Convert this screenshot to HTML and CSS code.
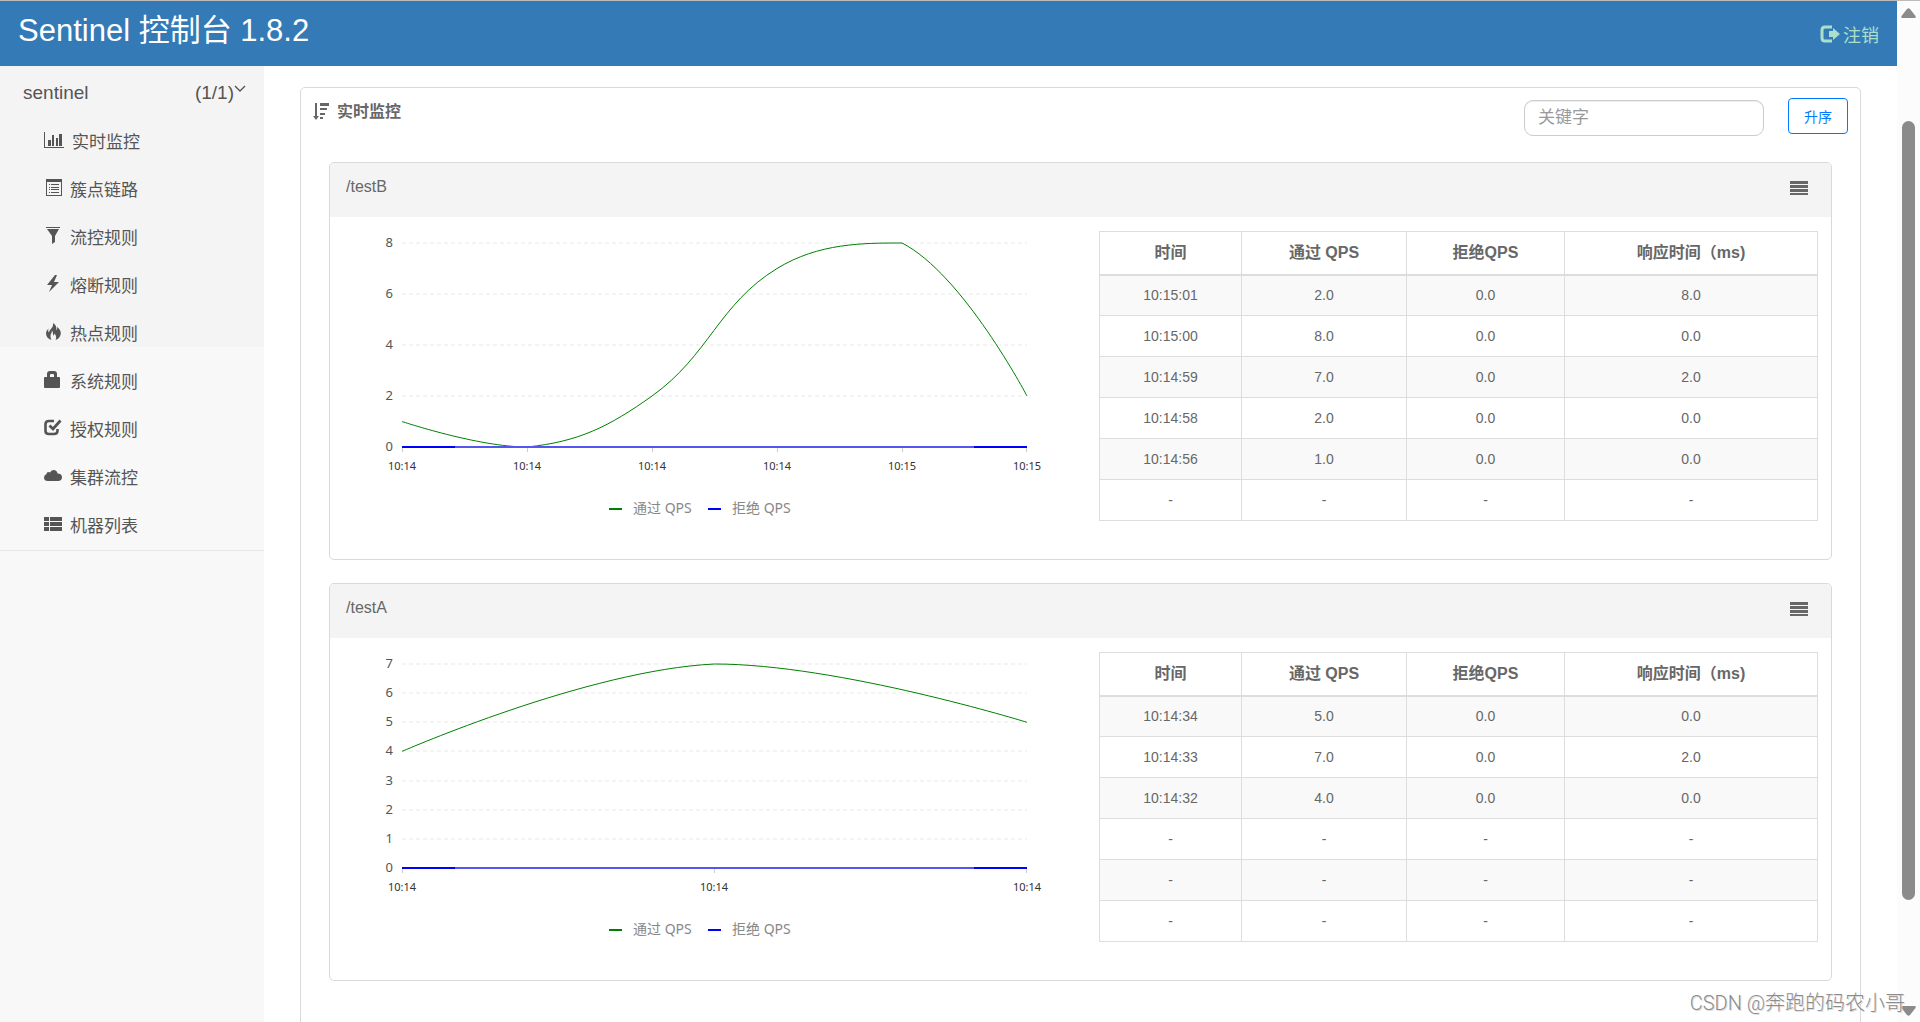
FILE: index.html
```html
<!DOCTYPE html>
<html lang="zh-CN">
<head>
<meta charset="utf-8">
<title>Sentinel 控制台</title>
<link rel="stylesheet" href="styles.css">
</head>
<body>
<div class="window">
  <div class="app">
    <header class="topbar">
      <h1 class="brand">Sentinel 控制台 1.8.2</h1>
      <a class="logout" href="#">
        <svg class="icon-logout" viewBox="0 0 20 18" aria-hidden="true"><path d="M12 2H5Q2 2 2 5v8q0 3 3 3h7" fill="none" stroke="currentColor" stroke-width="3"/><path d="M9 6h4V3l7 6-7 6v-3H9z" fill="currentColor"/></svg>注销</a>
    </header>
    <div class="columns">
      <nav class="sidebar">
        <a class="app-row" href="#"><span>sentinel</span><span class="app-count">(1/1)<svg class="caret" viewBox="0 0 12 8" aria-hidden="true"><path d="M1 1l5 5 5-5" fill="none" stroke="currentColor" stroke-width="1.4"/></svg></span></a>
        <ul class="menu">
          <li><a href="#"><svg class="icon wide" viewBox="0 0 20 16"><path d="M0 0h1v15h19v1H0zM4 8h3v6H4zM8 3h2v11H8zM12 6h2v8h-2zM15 2h3v12h-3z"/></svg>实时监控</a></li>
          <li><a href="#"><svg class="icon" viewBox="0 0 18 18"><path fill-rule="evenodd" d="M2 0h16v17H2zM3 3v13h14V3zM5 5h1v1H5zM7 5h8v1H7zM5 8h1v1H5zM7 8h8v1H7zM5 10h1v1H5zM7 10h8v1H7zM5 13h1v1H5zM7 13h8v1H7z"/></svg>簇点链路</a></li>
          <li><a href="#"><svg class="icon" viewBox="0 0 18 18"><path d="M2 0h14v1H2zM3 2h12l-4 7v6l-3 2V9z"/></svg>流控规则</a></li>
          <li><a href="#"><svg class="icon" viewBox="0 0 18 18"><path d="M11 0L3 10h5L5 17l10-10H10L13 0z"/></svg>熔断规则</a></li>
          <li><a href="#"><svg class="icon" viewBox="0 0 18 18"><path d="M9 0c3 2 4 4 3 7 1-.4 1.400-1.500 1-3 3 2 4.500 5 3.500 8-.8 2.600-2.500 4.300-5 5 1-2 1-4-1-6.500-.3 1-.6 1.800-1.500 2.300C9 10.500 9 9 8 7.500 8 10 6.300 11 6.500 13.500c.1 1.500.5 2.500 1 3.500C4 16 2 13.500 2 10 2.200 8.500 3 7 4.500 5.500c-.4 1.800-.4 3 .3 4C5.500 6.500 10 4.500 9 0z"/></svg>热点规则</a></li>
          <li><a href="#"><svg class="icon" viewBox="0 0 18 18"><path fill-rule="evenodd" d="M3 6V3q0-3 3-3h4q3 0 3 3v3h2q1 0 1 1v9q0 1-1 1H1q-1 0-1-1V7q0-1 1-1zM6 6h4V4q0-1-1-1H7Q6 3 6 4z"/></svg>系统规则</a></li>
          <li><a href="#"><svg class="icon" viewBox="0 0 18 18"><path d="M10 2H5Q1.500 2 1.500 5v7q0 3 3.500 3h5q3.500 0 3.500-3v-2" fill="none" stroke="currentColor" stroke-width="2.600"/><path d="M5.500 6.500L9 10l7.500-8.500" fill="none" stroke="currentColor" stroke-width="2.800"/></svg>授权规则</a></li>
          <li><a href="#"><svg class="icon" viewBox="0 0 18 18"><path d="M4 14Q0 14 0 10.500 0 8 2.500 7 2.500 5 4.500 5q1 0 1.500.5Q7 3 9.500 3 13 3 13.500 6.500 18 6.500 18 10.300 18 14 14 14z"/></svg>集群流控</a></li>
          <li><a href="#"><svg class="icon" viewBox="0 0 18 18"><path d="M0 2h5v4H0zM6 2h12v4H6zM0 7h5v4H0zM6 7h12v4H6zM0 12h5v4H0zM6 12h12v4H6z"/></svg>机器列表</a></li>
        </ul>
      </nav>
      <main class="content">
        <section class="panel">
          <div class="panel-head">
            <h2 class="panel-title"><svg class="icon-sort" viewBox="0 0 16 17" aria-hidden="true"><path d="M2 0h2v13h2l-3 4-3-4h2zM7 0h9v3H7zM7 5h7v2H7zM7 10h5v2H7zM7 14h3v2H7z"/></svg>实时监控</h2>
            <div class="tools">
              <input class="search" type="text" placeholder="关键字" aria-label="关键字">
              <button class="sort-btn" type="button">升序</button>
            </div>
          </div>

          <article class="card">
            <header class="card-head"><h3>/testB</h3><button class="list-btn" type="button" aria-label="列表"><svg viewBox="0 0 18 14"><path d="M0 0h18v3H0zM0 4h18v3H0zM0 8h18v3H0zM0 12h18v2H0z"/></svg></button></header>
            <div class="card-body">
              <svg class="chart" viewBox="0 0 743 289" role="img" aria-label="/testB QPS">
                <path class="grid" d="M59 12H684M59 63H684M59 114H684M59 165H684"/>
                <g class="y-label"><text x="50" y="16">8</text><text x="50" y="67">6</text><text x="50" y="118">4</text><text x="50" y="169">2</text><text x="50" y="220">0</text></g>
                <path class="tick" d="M59.500 216v5M184.500 216v5M309.500 216v5M434.500 216v5M559.500 216v5M683.500 216v5"/>
                <path class="pass" d="M59 190.500C59 190.500 135.400 216 184 216C235.400 210.800 266 195.700 309 165C366 124.300 375.700 73.200 434 37.500C475.700 12 519.800 12 559 12C619.800 43 684 165 684 165"/>
                <path class="block-mid" d="M112 216H631"/><path class="block" d="M59 216h53M631 216h53"/>
                <g class="x-label"><text x="59" y="239">10:14</text><text x="184" y="239">10:14</text><text x="309" y="239">10:14</text><text x="434" y="239">10:14</text><text x="559" y="239">10:15</text><text x="684" y="239">10:15</text></g>
                <path class="key-pass" d="M266 278h13"/><path class="key-block" d="M365 278h13"/>
                <g class="legend"><text x="290" y="282">通过 QPS</text><text x="389" y="282">拒绝 QPS</text></g>
              </svg>
              <table class="metrics">
                <colgroup><col class="c-time"><col class="c-pass"><col class="c-block"><col></colgroup>
                <thead><tr><th>时间</th><th>通过 QPS</th><th>拒绝QPS</th><th>响应时间（ms)</th></tr></thead>
                <tbody>
                  <tr><td>10:15:01</td><td>2.0</td><td>0.0</td><td>8.0</td></tr>
                  <tr><td>10:15:00</td><td>8.0</td><td>0.0</td><td>0.0</td></tr>
                  <tr><td>10:14:59</td><td>7.0</td><td>0.0</td><td>2.0</td></tr>
                  <tr><td>10:14:58</td><td>2.0</td><td>0.0</td><td>0.0</td></tr>
                  <tr><td>10:14:56</td><td>1.0</td><td>0.0</td><td>0.0</td></tr>
                  <tr><td>-</td><td>-</td><td>-</td><td>-</td></tr>
                </tbody>
              </table>
            </div>
          </article>

          <article class="card">
            <header class="card-head"><h3>/testA</h3><button class="list-btn" type="button" aria-label="列表"><svg viewBox="0 0 18 14"><path d="M0 0h18v3H0zM0 4h18v3H0zM0 8h18v3H0zM0 12h18v2H0z"/></svg></button></header>
            <div class="card-body">
              <svg class="chart" viewBox="0 0 743 289" role="img" aria-label="/testA QPS">
                <path class="grid" d="M59 12H684M59 41H684M59 70H684M59 99H684M59 129H684M59 158H684M59 187H684"/>
                <g class="y-label"><text x="50" y="16">7</text><text x="50" y="45">6</text><text x="50" y="74">5</text><text x="50" y="103">4</text><text x="50" y="133">3</text><text x="50" y="162">2</text><text x="50" y="191">1</text><text x="50" y="220">0</text></g>
                <path class="tick" d="M59.500 216v5M371.500 216v5M683.500 216v5"/>
                <path class="pass" d="M59 99.400C59 99.400 245.300 17.900 371.500 12C495.300 12 684 70.300 684 70.300"/>
                <path class="block-mid" d="M112 216H631"/><path class="block" d="M59 216h53M631 216h53"/>
                <g class="x-label"><text x="59" y="239">10:14</text><text x="371" y="239">10:14</text><text x="684" y="239">10:14</text></g>
                <path class="key-pass" d="M266 278h13"/><path class="key-block" d="M365 278h13"/>
                <g class="legend"><text x="290" y="282">通过 QPS</text><text x="389" y="282">拒绝 QPS</text></g>
              </svg>
              <table class="metrics">
                <colgroup><col class="c-time"><col class="c-pass"><col class="c-block"><col></colgroup>
                <thead><tr><th>时间</th><th>通过 QPS</th><th>拒绝QPS</th><th>响应时间（ms)</th></tr></thead>
                <tbody>
                  <tr><td>10:14:34</td><td>5.0</td><td>0.0</td><td>0.0</td></tr>
                  <tr><td>10:14:33</td><td>7.0</td><td>0.0</td><td>2.0</td></tr>
                  <tr><td>10:14:32</td><td>4.0</td><td>0.0</td><td>0.0</td></tr>
                  <tr><td>-</td><td>-</td><td>-</td><td>-</td></tr>
                  <tr><td>-</td><td>-</td><td>-</td><td>-</td></tr>
                  <tr><td>-</td><td>-</td><td>-</td><td>-</td></tr>
                </tbody>
              </table>
            </div>
          </article>
        </section>
      </main>
    </div>
  </div>
  <div class="scrollbar" aria-hidden="true">
    <svg class="arrow" viewBox="0 0 15 10"><path d="M6 1q1.500-1.500 3 0l5.500 7q.8 2-1 2h-12q-1.800 0-1-2z"/></svg>
    <div class="track"><div class="thumb"></div></div>
    <svg class="arrow" viewBox="0 0 15 10"><path d="M6 9q1.500 1.500 3 0l5.500-7q.8-2-1-2h-12q-1.800 0-1 2z"/></svg>
  </div>
  <div class="watermark">CSDN @奔跑的码农小哥</div>
</div>
</body>
</html>
```
FILE: styles.css
```css
* { box-sizing: border-box; }
body {
  margin: 0;
  background: #fff;
  color: #676767;
  font-family: "Liberation Sans", "Noto Sans CJK SC", sans-serif;
  font-size: 16px;
}
a { color: inherit; text-decoration: none; }
h1, h2, h3 { margin: 0; font-weight: 400; }

/* page frame */
.window {
  position: relative;
  display: flex;
  height: 100vh;
  overflow: hidden;
  border-top: 1px solid #bbb;
}
.app { flex: 1; min-width: 0; display: flex; flex-direction: column; }

/* top bar */
.topbar {
  flex: none;
  display: flex;
  justify-content: space-between;
  height: 65px;
  padding: 0 18px;
  background: #337ab7;
}
.brand { color: #fff; font-size: 31px; line-height: 60px; }
.logout {
  display: flex;
  align-items: center;
  gap: 3px;
  color: #abdfcb;
  font-size: 18px;
}
.icon-logout { width: 20px; height: 18px; }

.columns { flex: 1; min-height: 0; display: flex; }

/* sidebar */
.sidebar {
  flex: none;
  width: 264px;
  background: linear-gradient(#f4f4f4 281px, #f8f8f8 281px);
  color: #555;
}
.app-row {
  display: flex;
  justify-content: space-between;
  padding: 3px 18px 0 23px;
  font-size: 19px;
  line-height: 47px;
}
.app-count { display: flex; }
.caret { width: 12px; height: 8px; margin-top: 16px; }
.menu {
  margin: 0;
  padding: 0 0 2px;
  list-style: none;
  border-bottom: 1px solid #e7e7e7;
}
.menu a {
  display: flex;
  align-items: center;
  gap: 8px;
  height: 48px;
  padding-left: 44px;
  font-size: 17px;
}
.icon { width: 18px; height: 18px; fill: currentColor; }
.icon.wide { width: 20px; height: 16px; }

/* content */
.content { flex: 1; min-width: 0; padding: 21px 36px 0; }
.panel {
  min-height: 1100px;
  padding: 0 28px;
  border: 1px solid #d9d9d9;
  border-radius: 5px;
}
.panel-head {
  display: flex;
  justify-content: space-between;
  height: 74px;
  margin: 0 -16px;
  padding-top: 10px;
}
.panel-title {
  display: flex;
  gap: 8px;
  font-size: 16px;
  font-weight: 700;
  line-height: 28px;
}
.icon-sort { width: 16px; height: 17px; margin-top: 5px; fill: currentColor; }
.tools { display: flex; align-items: flex-end; gap: 24px; height: 38px; }
.search {
  width: 240px;
  height: 36px;
  padding: 0 13px;
  border: 1px solid #ccc;
  border-radius: 9px;
  box-shadow: inset 0 1px 1px rgba(0, 0, 0, .075);
  font: inherit;
  font-size: 17px;
}
.search::placeholder { color: #999; }
.sort-btn {
  align-self: flex-start;
  width: 60px;
  height: 36px;
  padding: 0;
  border: 1px solid #007bff;
  border-radius: 4px;
  background: #fff;
  color: #007bff;
  font: inherit;
  font-size: 14px;
}

.card { margin-bottom: 23px; border: 1px solid #d9d9d9; border-radius: 5px; }
.card-head {
  display: flex;
  justify-content: space-between;
  height: 54px;
  padding: 0 23px 0 16px;
  border-radius: 4px 4px 0 0;
  background: #f4f4f4;
}
.card-head h3 { font-size: 16px; line-height: 48px; }
.list-btn { padding: 0 0 4px; border: 0; background: none; color: inherit; }
.list-btn svg { display: block; width: 18px; height: 14px; fill: currentColor; }
.card-body {
  display: grid;
  grid-template-columns: 743fr 719fr;
  gap: 13px;
  align-items: start;
  padding: 14px 13px 38px;
}

/* chart */
.chart {
  display: block;
  width: 100%;
  font-family: "Noto Sans", "Noto Sans CJK SC", sans-serif;
}
.chart path { fill: none; }
.grid { stroke: #e9e9e9; stroke-dasharray: 4 3; }
.tick { stroke: #ccc; }
.pass { stroke: #008000; }
.block { stroke: #00f; stroke-width: 2; }
.block-mid { stroke: #5555f0; stroke-width: 2; }
.key-pass { stroke: #008000; stroke-width: 2; }
.key-block { stroke: #00f; stroke-width: 2; }
.y-label { font-size: 13px; text-anchor: end; fill: #555; }
.x-label { font-size: 11px; text-anchor: middle; fill: #333; }
.legend { font-size: 14px; fill: #888; }

/* metrics table */
.metrics {
  width: 100%;
  table-layout: fixed;
  border-collapse: collapse;
  text-align: center;
}
.metrics th, .metrics td { padding: 0; border: 1px solid #ddd; }
.metrics th { height: 43px; border-bottom-width: 2px; font-size: 16px; line-height: 24px; }
.metrics td { height: 41px; font-size: 14px; line-height: 20px; }
.metrics tbody tr:nth-child(odd) { background: #f9f9f9; }
.c-time { width: 142px; }
.c-pass { width: 165px; }
.c-block { width: 158px; }

/* scrollbar */
.scrollbar {
  flex: none;
  display: flex;
  flex-direction: column;
  align-items: center;
  width: 23px;
  padding: 7px 0 6px;
  background: #fcfcfc;
}
.arrow { flex: none; width: 15px; height: 10px; fill: #8b8b8b; }
.track { flex: 1; width: 13px; padding-top: 103px; }
.thumb { height: 88%; border-radius: 7px; background: #8b8b8b; }

.watermark {
  position: absolute;
  right: 15px;
  bottom: 4px;
  color: #8c8c8c;
  font-family: Roboto, "Noto Sans CJK SC", sans-serif;
  font-size: 20px;
  font-weight: 300;
  line-height: 30px;
  text-shadow: 1px 1px 0 #ddd;
}
```
